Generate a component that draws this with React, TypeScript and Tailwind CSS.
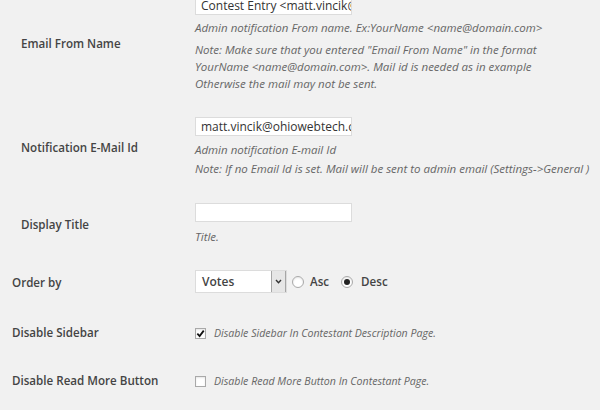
import React from "react";

const label = "text-[11.6px] font-semibold text-[#444] leading-[16px]";
const desc = "text-[11.5px] italic text-[#666]";
const cdesc = "text-[10.6px] italic text-[#666]";
const input =
  "h-[19px] w-[157px] border border-[#dcdcdc] bg-white text-[12px] text-[#333] px-[5px] leading-[17px] overflow-hidden whitespace-nowrap";

function Radio({ checked }: { checked?: boolean }) {
  return (
    <span className="w-[12px] h-[12px] rounded-full border border-[#a9a9a9] bg-white flex items-center justify-center shadow-[inset_0_1px_2px_rgba(0,0,0,0.1)]">
      {checked && <span className="w-[6px] h-[6px] rounded-full bg-[#222]" />}
    </span>
  );
}

function Checkbox({ checked }: { checked?: boolean }) {
  return (
    <span className="w-[11px] h-[11px] border border-[#a9a9a9] bg-white flex items-center justify-center shadow-[inset_0_1px_2px_rgba(0,0,0,0.1)]">
      {checked && (
        <svg width="9" height="9" viewBox="0 0 10 10">
          <path d="M1.5 5.2 L4 7.8 L8.6 1.8" fill="none" stroke="#111" strokeWidth="2" />
        </svg>
      )}
    </span>
  );
}

export default function App() {
  return (
    <div className="w-[600px] h-[410px] overflow-hidden bg-[#f1f1f1] font-['Open_Sans',sans-serif]">
      {/* Row 1 */}
      <div className="flex items-center -mt-[4px]">
        <div className={`w-[195px] pl-[21px] ${label}`}>Email From Name</div>
        <div className="flex flex-col">
          <div className={input}>Contest Entry &lt;matt.vincik@ohiowebtech.com&gt;</div>
          <div className={`${desc} mt-[4px] leading-[17px] whitespace-nowrap`}>
            Admin notification From name. Ex:YourName &lt;name@domain.com&gt;
          </div>
          <div className={`${desc} mt-[5px] leading-[17px] whitespace-nowrap`}>
            Note: Make sure that you entered "Email From Name" in the format
            <br />
            YourName &lt;name@domain.com&gt;. Mail id is needed as in example
            <br />
            Otherwise the mail may not be sent.
          </div>
        </div>
      </div>

      {/* Row 2 */}
      <div className="flex items-center mt-[25px]">
        <div className={`w-[195px] pl-[21px] ${label}`}>Notification E-Mail Id</div>
        <div className="flex flex-col">
          <div className={input}>matt.vincik@ohiowebtech.com</div>
          <div className={`${desc} mt-[4px] leading-[19px]`}>Admin notification E-mail Id</div>
          <div className={`${desc} leading-[19px] whitespace-nowrap`}>
            Note: If no Email Id is set. Mail will be sent to admin email (Settings-&gt;General )
          </div>
        </div>
      </div>

      {/* Row 3 */}
      <div className="flex items-center mt-[25px]">
        <div className={`w-[195px] pl-[21px] ${label}`}>Display Title</div>
        <div className="flex flex-col">
          <div className={input}></div>
          <div className={`${desc} mt-[6px] leading-[18px]`}>Title.</div>
        </div>
      </div>

      {/* Row 4 */}
      <div className="flex items-center mt-[24px]">
        <div className={`w-[195px] pl-[12px] pt-[3px] ${label}`}>Order by</div>
        <div className="flex items-center">
          <div className="h-[23px] w-[92px] border border-[#dcdcdc] bg-white flex items-center">
            <span className="flex-1 pl-[6px] text-[12px] font-semibold text-[#444]">Votes</span>
            <span className="w-[15px] h-[21px] bg-[#e6e6e6] border-l border-r border-[#a6a6a6] flex items-center justify-center">
              <svg width="7" height="5" viewBox="0 0 7 5">
                <path d="M1 1 L3.5 3.8 L6 1" fill="none" stroke="#333" strokeWidth="1.4" />
              </svg>
            </span>
          </div>
          <span className="ml-[5px]"><Radio /></span>
          <span className={`ml-[6px] ${label}`}>Asc</span>
          <span className="ml-[12px]"><Radio checked /></span>
          <span className={`ml-[8px] ${label}`}>Desc</span>
        </div>
      </div>

      {/* Row 5 */}
      <div className="flex items-center mt-[30px] h-[20px]">
        <div className={`w-[195px] pl-[12px] ${label}`}>Disable Sidebar</div>
        <Checkbox checked />
        <span className={`ml-[8px] ${cdesc} leading-[16px]`}>Disable Sidebar In Contestant Description Page.</span>
      </div>

      {/* Row 6 */}
      <div className="flex items-center mt-[28px] h-[20px]">
        <div className={`w-[195px] pl-[12px] ${label}`}>Disable Read More Button</div>
        <Checkbox />
        <span className={`ml-[8px] ${cdesc} leading-[16px]`}>Disable Read More Button In Contestant Page.</span>
      </div>
    </div>
  );
}
